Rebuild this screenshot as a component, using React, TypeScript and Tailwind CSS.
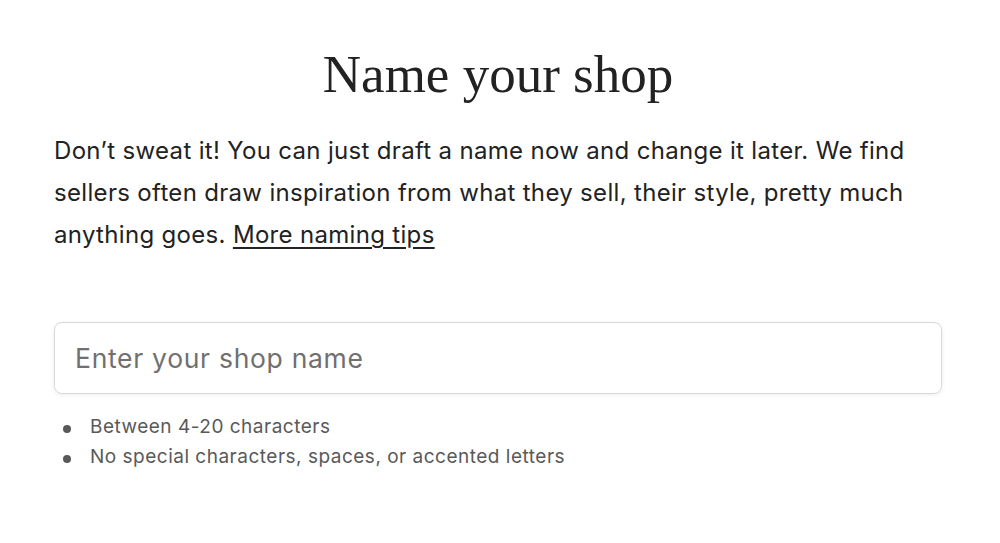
export default function App() {
  return (
    <div className="min-h-[543px] bg-white">
      <div className="ml-[54px] w-[888px] pt-[44px] font-['Inter',sans-serif] text-[#222222]">
        <h1 className="text-center font-['Liberation_Serif',serif] text-[53px] leading-[60px] font-light">
          Name your shop
        </h1>

        <p className="mt-[26px] text-[24px] leading-[42px] tracking-[0.32px] text-[#222222]">
          Don’t sweat it! You can just draft a name now and change it later. We find
          <br />
          sellers often draw inspiration from what they sell, their style, pretty much
          <br />
          anything goes.{" "}
          <a href="#" className="underline underline-offset-4">
            More naming tips
          </a>
        </p>

        <input
          type="text"
          placeholder="Enter your shop name"
          className="mt-[66px] block h-[72px] w-full rounded-[8px] border border-[#d9d9d9] px-[20px] text-[26.5px] tracking-[0.7px] shadow-[0_1px_4px_rgba(0,0,0,0.08)] outline-none placeholder:text-[#707070]"
        />

        <ul className="mt-[18px] text-[19px] leading-[30px] tracking-[0.5px] text-[#595959]">
          <li className="flex items-center">
            <span className="mx-[9px] mt-[4px] h-[8px] w-[8px] rounded-full bg-[#595959]" />
            <span className="ml-[10px]">Between 4-20 characters</span>
          </li>
          <li className="flex items-center">
            <span className="mx-[9px] mt-[4px] h-[8px] w-[8px] rounded-full bg-[#595959]" />
            <span className="ml-[10px]">No special characters, spaces, or accented letters</span>
          </li>
        </ul>
      </div>
    </div>
  );
}
